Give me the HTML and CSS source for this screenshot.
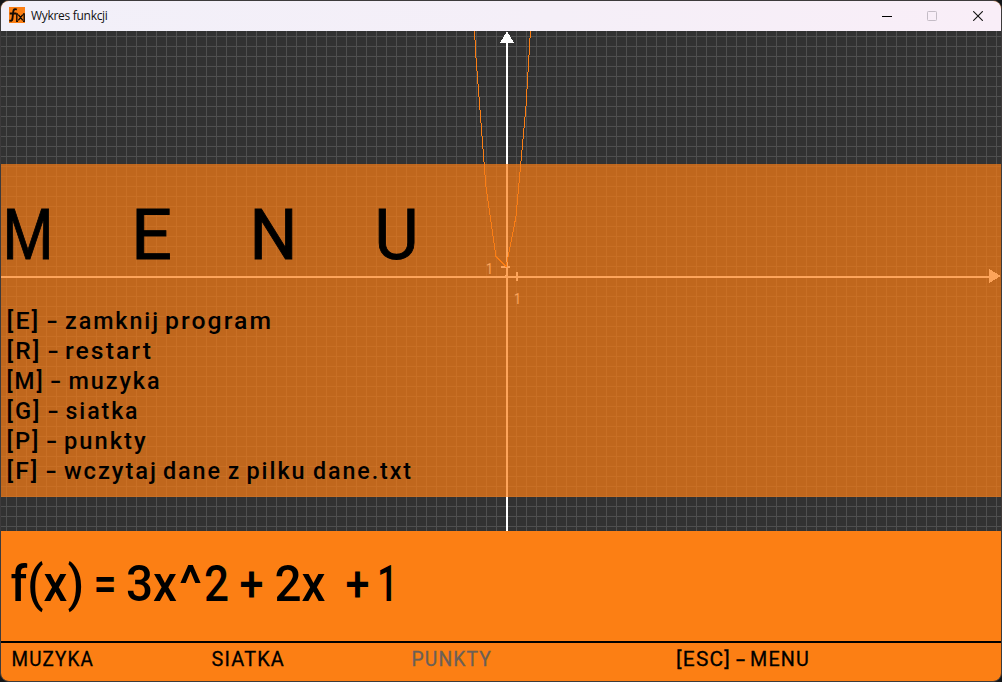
FILE: index.html
```html
<!DOCTYPE html>
<html lang="pl">
<head>
<meta charset="utf-8">
<title>Wykres funkcji</title>
<link rel="stylesheet" href="styles.css">
</head>
<body>
<div class="window">
  <header class="titlebar">
    <svg class="app-icon" viewBox="0 0 16 16">
      <rect width="16" height="16" fill="#fc7f14"/>
      <path d="M7.8 2.6Q4.6 1 4.2 5L3.4 12Q3 14.5 .4 13.4M.8 6.5H7.5" fill="none" stroke="#140b03" stroke-width="1.9"/>
      <path d="M9 7H7.8V14.4H9M14 7H15.2V14.4H14M9.3 7.6L13.8 13.4M13.8 7.6L9.3 13.4" fill="none" stroke="#140b03" stroke-width="1.4"/>
    </svg>
    <span class="caption">Wykres funkcji</span>
    <div class="controls">
      <svg viewBox="0 0 10 10"><path d="M0 5.5H10" stroke="#000"/></svg>
      <svg viewBox="0 0 10 10"><rect x=".5" y=".5" width="9" height="9" rx=".8" fill="none" stroke="#c4bcc6"/></svg>
      <svg viewBox="0 0 10 10"><path d="M.2 .2L9.8 9.8M9.8 .2L.2 9.8" stroke="#111" stroke-width="1.1"/></svg>
    </div>
  </header>

  <main class="plot">
    <svg class="graph" viewBox="1 31 1000 500">
      <defs>
        <pattern id="grid" width="10" height="10" patternUnits="userSpaceOnUse" x="6" y="6">
          <path d="M0 0H10V1H1V10H0Z" fill="#4f4f4f"/>
        </pattern>
      </defs>
      <rect x="1" y="31" width="1000" height="500" fill="url(#grid)"/>
      <g fill="#fff" shape-rendering="crispEdges">
        <rect x="506" y="36" width="2" height="495"/>
        <rect x="1" y="276" width="994" height="2"/>
        <path d="M507 31L514 43H500Z"/>
        <path d="M1001 276L989 269V283Z"/>
        <rect x="501" y="266" width="9" height="2"/>
        <rect x="516" y="272" width="2" height="9"/>
        <rect x="505" y="275" width="2" height="1"/>
      </g>
      <path class="curve" d="M465.9 -133.5L475.9 56.5L485.9 186.5L495.9 256.5L506.2 266.5L516 216.5L526 106.5L536 -63.5"/>
      <g class="tick-label">
        <text x="486" y="274" textLength="7" lengthAdjust="spacingAndGlyphs">1</text>
        <text x="514" y="304" textLength="7" lengthAdjust="spacingAndGlyphs">1</text>
      </g>
    </svg>

    <section class="menu">
      <svg class="menu-title" viewBox="1 164 1000 141">
        <text x="2.5" y="259" textLength="51" lengthAdjust="spacingAndGlyphs">M</text>
        <text x="131" y="259" textLength="41" lengthAdjust="spacingAndGlyphs">E</text>
        <text x="249.500" y="259" textLength="48" lengthAdjust="spacingAndGlyphs">N</text>
        <text x="374.500" y="259" textLength="44" lengthAdjust="spacingAndGlyphs">U</text>
      </svg>
      <svg class="menu-line" viewBox="1 0 1000 30">
        <text x="6.500" y="24" textLength="34">[E]</text><text x="46.500" y="24" textLength="14">-</text><text x="65" y="24" textLength="95">zamknij</text><text x="165" y="24" textLength="108">program</text>
      </svg>
      <svg class="menu-line" viewBox="1 0 1000 30">
        <text x="6.500" y="24" textLength="35">[R]</text><text x="47.500" y="24" textLength="14">-</text><text x="65" y="24" textLength="88">restart</text>
      </svg>
      <svg class="menu-line" viewBox="1 0 1000 30">
        <text x="6.500" y="24" textLength="38">[M]</text><text x="50" y="24" textLength="14">-</text><text x="68.500" y="24" textLength="93">muzyka</text>
      </svg>
      <svg class="menu-line" viewBox="1 0 1000 30">
        <text x="6.500" y="24" textLength="35">[G]</text><text x="47.500" y="24" textLength="14">-</text><text x="65.5" y="24" textLength="74">siatka</text>
      </svg>
      <svg class="menu-line" viewBox="1 0 1000 30">
        <text x="6.500" y="24" textLength="34">[P]</text><text x="46" y="24" textLength="14">-</text><text x="64" y="24" textLength="83.5">punkty</text>
      </svg>
      <svg class="menu-line" viewBox="1 0 1000 30">
        <text x="6.500" y="24" textLength="33">[F]</text><text x="45.500" y="24" textLength="14">-</text><text x="64" y="24" textLength="94">wczytaj</text><text x="163" y="24" textLength="59">dane</text><text x="228" y="24" textLength="13">z</text><text x="246.5" y="24" textLength="60">pilku</text><text x="313" y="24" textLength="100">dane.txt</text>
      </svg>
    </section>
  </main>

  <section class="formula">
    <svg viewBox="1 531 1000 110">
      <text x="10.500" y="601" textLength="73.500">f(x)</text>
      <text x="93.5" y="601" textLength="23">=</text>
      <text x="126" y="601" textLength="51">3x</text><text x="179" y="601" textLength="23">^</text><text x="204" y="601" textLength="25">2</text>
      <text x="239.500" y="601" textLength="24">+</text>
      <text x="274.500" y="601" textLength="51">2x</text>
      <text x="345.500" y="601" textLength="24">+</text>
      <text x="377" y="601" textLength="21">1</text>
    </svg>
  </section>

  <footer class="status">
    <svg viewBox="1 643 1000 38">
      <text x="11.500" y="666" textLength="82.500">MUZYKA</text>
      <text x="211.500" y="666" textLength="73.500">SIATKA</text>
      <text class="off" x="411.500" y="666" textLength="80.500">PUNKTY</text>
      <text x="676" y="666" textLength="55">[ESC]</text><text x="736" y="666" textLength="11">-</text><text x="750" y="666" textLength="60">MENU</text>
    </svg>
  </footer>
</div>
<script src="text.js"></script>
</body>
</html>
```
FILE: text.js
```js
document.querySelectorAll('text[textLength]').forEach(function (t) {
  t.setAttribute('lengthAdjust', 'spacingAndGlyphs');
});
```
FILE: styles.css
```css
* { box-sizing: border-box; }
body { margin: 0; background: #131619; font-family: Roboto, "Liberation Sans", sans-serif; }
svg { display: block; }
.window { width: 1002px; height: 682px; border: 1px solid #3d3b3c; border-radius: 9px; overflow: hidden; background: #fc7f14; }
.titlebar { height: 30px; display: flex; align-items: center; padding-left: 8px; background: linear-gradient(90deg, #f2f0f9, #f5eff8 55%, #f9eef8); }
.app-icon { width: 16px; height: 16px; margin-top: -2px; }
.caption { margin: -1px 0 0 6px; font: 12px "Open Sans", sans-serif; letter-spacing: -0.3px; color: #111; }
.controls { margin: -1px 18px 0 auto; display: flex; gap: 36px; }
.controls svg { width: 10px; height: 10px; }
.controls svg:first-child { margin-right: -1px; }
.plot { position: relative; height: 500px; background: #323232; }
.graph { width: 1000px; height: 500px; }
.curve { fill: none; stroke: #fc7f14; stroke-width: 1; shape-rendering: crispEdges; }
.tick-label { font-size: 15px; fill: #fff; }
.menu { position: absolute; left: 0; right: 0; top: 133px; height: 333px; background: rgba(252, 126, 20, .7); }
.menu-title { width: 1000px; height: 141px; font-size: 70px; font-weight: 400; stroke: #000; stroke-width: .9px; }
.menu-line { width: 1000px; height: 30px; font-size: 24px; font-weight: 500; letter-spacing: 2px; }
.formula { height: 112px; border-bottom: 2px solid #000; }
.formula svg { width: 1000px; height: 110px; font-size: 50px; font-weight: 500; }
.status { height: 38px; font-size: 20px; letter-spacing: 1.2px; }
.status svg { width: 1000px; height: 38px; stroke: #000; stroke-width: .3px; }
.off { fill: #6b6057; stroke: #6b6057; }
```
